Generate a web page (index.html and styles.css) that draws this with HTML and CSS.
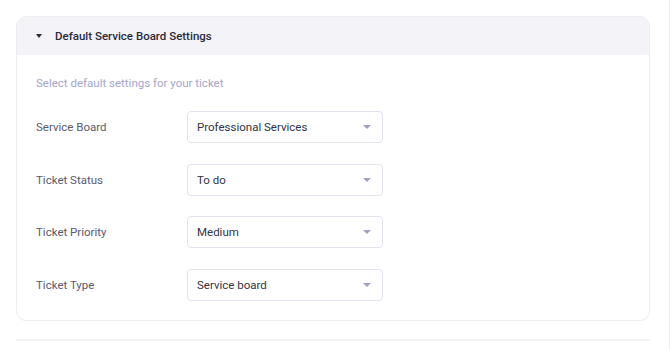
FILE: index.html
```html
<!DOCTYPE html>
<html lang="en">
<head>
  <meta charset="UTF-8" />
  <title>Service Board Settings</title>
  <link rel="stylesheet" href="styles.css">
</head>
<body>
  <div class="page">
    <!-- Default Service Board Settings -->
    <div class="card">
      <div class="card-head">
        <span class="head-caret"></span>
        <h3>Default Service Board Settings</h3>
      </div>
      <div class="card-body">
        <p class="hint">Select default settings for your ticket</p>

        <div class="row">
          <label>Service Board</label>
          <div class="select"><span>Professional Services</span><i class="caret"></i></div>
        </div>
        <div class="row">
          <label>Ticket Status</label>
          <div class="select"><span>To do</span><i class="caret"></i></div>
        </div>
        <div class="row">
          <label>Ticket Priority</label>
          <div class="select"><span>Medium</span><i class="caret"></i></div>
        </div>
        <div class="row">
          <label>Ticket Type</label>
          <div class="select"><span>Service board</span><i class="caret"></i></div>
        </div>
      </div>
    </div>
    <div class="divider"></div>
  </div>
</body>
</html>
```

FILE: styles.css
```css
* { margin: 0; padding: 0; box-sizing: border-box; font-family: Roboto, 'Liberation Sans', sans-serif; }
body { background: #fff; }

.page {
  width: 670px; height: 350px;
  padding: 16px 19px 0 16px;
  border-right: 1px solid #ececf0;
}

.card {
  border: 1px solid #ececf2;
  border-radius: 10px;
  overflow: hidden;
}
.card-head {
  height: 38px;
  background: #f3f3f8;
  display: flex; align-items: center;
  padding-left: 19px;
}
.head-caret {
  width: 0; height: 0;
  border-left: 3.5px solid transparent;
  border-right: 3.5px solid transparent;
  border-top: 4px solid #2d2d3a;
  margin-right: 13px;
}
.card-head h3 { font-size: 11.5px; font-weight: 500; color: #2a2a38; }

.card-body { padding: 20px 19px 19px; }
.hint { font-size: 11.5px; color: #a3a6c8; line-height: 16px; margin-bottom: 20px; }

.row { display: flex; align-items: center; margin-bottom: 20.5px; }
.row:last-child { margin-bottom: 0; }
.row label { width: 151px; font-size: 11.5px; color: #595a6a; }

.select {
  width: 196px; height: 32px;
  border: 1px solid #e2e2ee;
  border-radius: 4px;
  display: flex; align-items: center; justify-content: space-between;
  padding: 0 11px 0 9px;
  font-size: 11.5px; color: #33333f;
}
.caret {
  width: 0; height: 0;
  border-left: 4px solid transparent;
  border-right: 4px solid transparent;
  border-top: 4px solid #9fa1bd;
}

.divider { height: 2px; background: #f3f3f6; margin-top: 18px; }
```
